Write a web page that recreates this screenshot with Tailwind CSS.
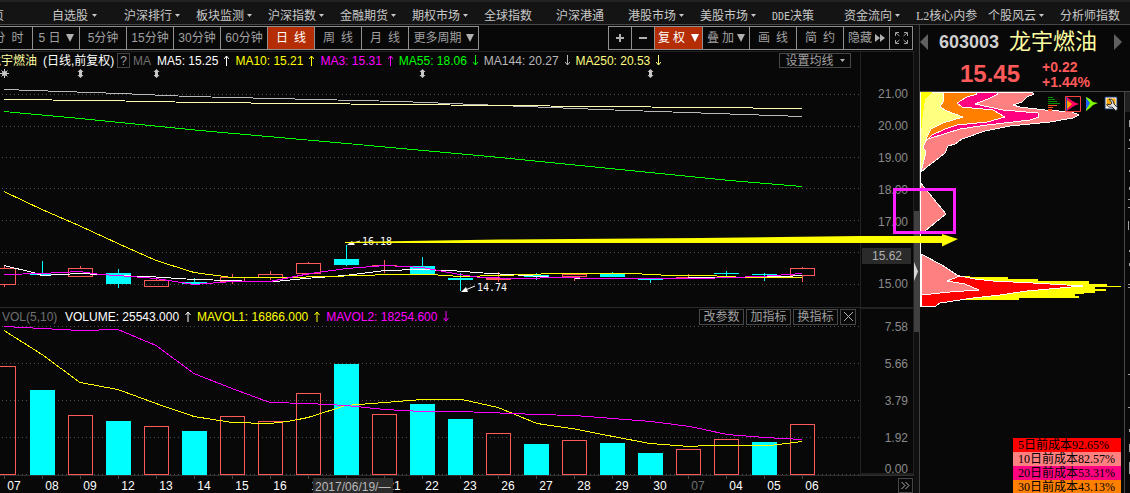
<!DOCTYPE html>
<html lang="zh-CN">
<head>
<meta charset="utf-8">
<title>603003 龙宇燃油</title>
<script src="https://cdn.jsdelivr.net/npm/@tailwindcss/browser@4"></script>
</head>
<body class="relative flex h-screen flex-col overflow-hidden bg-[#080808] font-['Liberation_Sans','Noto_Sans_CJK_SC',sans-serif] text-xs text-[#a0a0a0]">

<!-- Top navigation -->
<nav class="-ml-5 flex h-[25px] shrink-0 items-center border-t-2 border-b border-t-[#222] border-b-[#484848] bg-[#141414] pt-[5px] whitespace-nowrap text-[#c8c8c8]">
  <a href="#" class="w-[72px] shrink-0">首页</a>
  <a href="#" class="flex w-[72px] shrink-0 items-center gap-1">自选股<svg class="h-[3px] w-[5px]" viewBox="0 0 5 3"><path d="M0 0h5L2.500 3z" fill="#c8c8c8"/></svg></a>
  <a href="#" class="flex w-[72px] shrink-0 items-center gap-[3px]">沪深排行<svg class="h-[3px] w-[5px]" viewBox="0 0 5 3"><path d="M0 0h5L2.500 3z" fill="#c8c8c8"/></svg></a>
  <a href="#" class="flex w-[72px] shrink-0 items-center gap-[3px]">板块监测<svg class="h-[3px] w-[5px]" viewBox="0 0 5 3"><path d="M0 0h5L2.500 3z" fill="#c8c8c8"/></svg></a>
  <a href="#" class="flex w-[72px] shrink-0 items-center gap-[3px]">沪深指数<svg class="h-[3px] w-[5px]" viewBox="0 0 5 3"><path d="M0 0h5L2.500 3z" fill="#c8c8c8"/></svg></a>
  <a href="#" class="flex w-[72px] shrink-0 items-center gap-[3px]">金融期货<svg class="h-[3px] w-[5px]" viewBox="0 0 5 3"><path d="M0 0h5L2.500 3z" fill="#c8c8c8"/></svg></a>
  <a href="#" class="flex w-[72px] shrink-0 items-center gap-[3px]">期权市场<svg class="h-[3px] w-[5px]" viewBox="0 0 5 3"><path d="M0 0h5L2.500 3z" fill="#c8c8c8"/></svg></a>
  <a href="#" class="w-[72px] shrink-0">全球指数</a>
  <a href="#" class="w-[72px] shrink-0">沪深港通</a>
  <a href="#" class="flex w-[72px] shrink-0 items-center gap-[3px]">港股市场<svg class="h-[3px] w-[5px]" viewBox="0 0 5 3"><path d="M0 0h5L2.500 3z" fill="#c8c8c8"/></svg></a>
  <a href="#" class="flex w-[72px] shrink-0 items-center gap-[3px]">美股市场<svg class="h-[3px] w-[5px]" viewBox="0 0 5 3"><path d="M0 0h5L2.500 3z" fill="#c8c8c8"/></svg></a>
  <a href="#" class="w-[72px] shrink-0"><span class="font-['DejaVu_Sans_Mono',monospace] text-[10px]">DDE</span>决策</a>
  <a href="#" class="flex w-[72px] shrink-0 items-center gap-[3px]">资金流向<svg class="h-[3px] w-[5px]" viewBox="0 0 5 3"><path d="M0 0h5L2.500 3z" fill="#c8c8c8"/></svg></a>
  <a href="#" class="w-[72px] shrink-0"><span class="font-['Liberation_Serif',serif]">L2</span>核心内参</a>
  <a href="#" class="flex w-[72px] shrink-0 items-center gap-[3px]">个股风云<svg class="h-[3px] w-[5px]" viewBox="0 0 5 3"><path d="M0 0h5L2.500 3z" fill="#c8c8c8"/></svg></a>
  <a href="#" class="w-[72px] shrink-0">分析师指数</a>
</nav>

<div class="flex min-h-0 flex-1">
  <main class="flex min-w-0 flex-1 flex-col">
    <!-- Period toolbar -->
    <div class="flex h-[27px] shrink-0 items-center justify-between border-b border-[#222] pr-px whitespace-nowrap">
      <div class="-ml-[15px] flex h-6 border-y border-r border-[#909090]">
        <button class="flex w-[47px] items-center justify-center gap-[6px]"><span>分</span><span>时</span></button>
        <button class="flex w-[47px] items-center justify-center gap-[5px] border-l border-[#909090]"><span>5 日</span><svg class="h-2 w-2" viewBox="0 0 8 8"><path d="M0 0h8L4 8z" fill="#b0b0b0"/></svg></button>
        <button class="w-[47px] border-l border-[#909090]">5分钟</button>
        <button class="w-[47px] border-l border-[#909090]">15分钟</button>
        <button class="w-[47px] border-l border-[#909090]">30分钟</button>
        <button class="w-[47px] border-l border-[#909090]">60分钟</button>
        <button class="flex w-[47px] items-center justify-center gap-[6px] border-l border-[#909090] bg-[#b42d04] text-white"><span>日</span><span>线</span></button>
        <button class="flex w-[47px] items-center justify-center gap-[6px] border-l border-[#909090]"><span>周</span><span>线</span></button>
        <button class="flex w-[47px] items-center justify-center gap-[6px] border-l border-[#909090]"><span>月</span><span>线</span></button>
        <button class="flex w-[70px] items-center justify-center gap-1 border-l border-[#909090]">更多周期<svg class="h-2 w-2" viewBox="0 0 8 8"><path d="M0 0h8L4 8z" fill="#b0b0b0"/></svg></button>
      </div>
      <div class="flex h-6 border-y border-r border-[#909090]">
        <button aria-label="放大" class="flex w-[23px] items-center justify-center border-l border-[#909090]"><svg class="h-2 w-2" viewBox="0 0 8 8"><path d="M0 4h8M4 0v8" stroke="#b0b0b0" stroke-width="2"/></svg></button>
        <button aria-label="缩小" class="flex w-[23px] items-center justify-center border-l border-[#909090]"><svg class="h-2 w-2" viewBox="0 0 8 8"><path d="M0 4h8" stroke="#b0b0b0" stroke-width="2"/></svg></button>
        <button class="flex w-[48px] items-center justify-center gap-[3px] border-l border-[#909090] bg-[#b42d04] text-white"><span>复</span><span>权</span><svg class="ml-[3px] h-2 w-2" viewBox="0 0 8 8"><path d="M0 0h8L4 8z" fill="#fff"/></svg></button>
        <button class="flex w-[47px] items-center justify-center gap-[3px] border-l border-[#909090]"><span>叠</span><span>加</span><svg class="h-2 w-2" viewBox="0 0 8 8"><path d="M0 0h8L4 8z" fill="#b0b0b0"/></svg></button>
        <button class="flex w-[47px] items-center justify-center gap-[6px] border-l border-[#909090]"><span>画</span><span>线</span></button>
        <button class="flex w-[47px] items-center justify-center gap-[6px] border-l border-[#909090]"><span>简</span><span>约</span></button>
        <button class="flex w-[46px] items-center justify-center gap-[3px] border-l border-[#909090]">隐藏<svg class="h-2 w-[10px]" viewBox="0 0 10 8"><path d="M0 0l5 4-5 4zM5 0l5 4-5 4z" fill="#b0b0b0"/></svg></button>
        <button aria-label="全屏" class="flex w-[23px] items-center justify-center border-l border-[#909090]"><svg class="h-3 w-[13px]" viewBox="0 0 13 12" fill="none" stroke="#a0a0a0"><path d="M.5 4V.5H4M1 1l3.500 3M9 .5h3.500V4M12 1L8.500 4M.5 8v3.500H4M1 11l3.500-3M9 11.500h3.500V8M12 11L8.500 8"/></svg></button>
      </div>
    </div>

    <div class="flex min-h-0 flex-1">
      <div class="flex min-w-0 flex-1 flex-col">
        <!-- Price pane -->
        <div class="flex h-[17px] shrink-0 items-center pr-[9px] whitespace-nowrap">
          <div class="-ml-[11px] flex items-center gap-[6px]">
            <div class="flex items-center gap-[3px]">
              <span class="text-[#ffffa0]">龙宇燃油</span>
              <span class="w-[74px] pl-[3px] text-white">(日线,前复权)</span>
              <button class="h-[15px] w-[13px] border border-[#444] leading-3">?</button>
              <span class="w-[18px] text-[#707070]">MA</span>
            </div>
            <span class="text-white">MA5: 15.25</span>
            <svg class="h-[11px] w-[5px]" viewBox="0 0 5 11" fill="none" stroke="#fff"><path d="M2.500 11V1M0 4l2.500-3L5 4"/></svg>
            <span class="text-[#ff0]">MA10: 15.21</span>
            <svg class="h-[11px] w-[5px]" viewBox="0 0 5 11" fill="none" stroke="#ff0"><path d="M2.500 11V1M0 4l2.500-3L5 4"/></svg>
            <span class="text-[#f0f]">MA3: 15.31</span>
            <svg class="h-[11px] w-[5px]" viewBox="0 0 5 11" fill="none" stroke="#f0f"><path d="M2.500 11V1M0 4l2.500-3L5 4"/></svg>
            <span class="text-[#0f0]">MA55: 18.06</span>
            <svg class="h-[11px] w-[5px]" viewBox="0 0 5 11" fill="none" stroke="#0f0"><path d="M2.500 0v10M0 7l2.500 3L5 7"/></svg>
            <span class="text-[#b8b8b8]">MA144: 20.27</span>
            <svg class="h-[11px] w-[5px]" viewBox="0 0 5 11" fill="none" stroke="#b8b8b8"><path d="M2.500 0v10M0 7l2.500 3L5 7"/></svg>
            <span class="text-[#ffff80]">MA250: 20.53</span>
            <svg class="h-[11px] w-[5px]" viewBox="0 0 5 11" fill="none" stroke="#ffff80"><path d="M2.500 0v10M0 7l2.500 3L5 7"/></svg>
          </div>
          <button class="ml-auto flex h-[15px] w-[72px] items-center justify-center gap-[6px] border border-[#484848] leading-3">设置均线<svg class="h-[3px] w-[5px]" viewBox="0 0 5 3"><path d="M0 0h5L2.500 3z" fill="#b0b0b0"/></svg></button>
        </div>
        <svg class="min-h-0 w-full flex-1" viewBox="0 69 860 238" preserveAspectRatio="none" fill="none" shape-rendering="crispEdges">
          <path d="M2 94.500H860M2 126.500H860M2 157.500H860M2 188.500H860M2 220.500H860M2 252.500H860M2 284.500H860" stroke="#505050" stroke-dasharray="1 3"/>
          <!-- event markers -->
          <g fill="#c8c8c8" shape-rendering="auto">
            <path d="M80.500 69l3 3h-1.500v3h1.500l-3 3-3-3H79v-3h-1.500zM156.500 69l3 3H158v3h1.500l-3 3-3-3h1.500v-3h-1.500zM422.500 69l3 3H424v3h1.500l-3 3-3-3h1.500v-3h-1.500zM650.500 69l3 3H652v3h1.500l-3 3-3-3h1.500v-3h-1.500z"/>
            <circle cx="4.500" cy="73.500" r="2.500"/>
            <path d="M4.500 69v9M0 73.500h9M1.500 70.500l6 6M7.500 70.500l-6 6" stroke="#c8c8c8"/>
          </g>
          <!-- candles -->
          <g stroke="#ff5a5a">
            <path d="M-8.500 268.500h24v16h-24zM68.500 268.500h24v8h-24zM144.500 280.500h24v6h-24zM220.500 277.500h24v4h-24zM258.500 274.500h24v3h-24zM296.500 263.500h24v10h-24zM372 265.500h25M486.500 278.500h24v1h-24zM562.500 274.500h24v2h-24zM676 277.500h25M790.500 268.500h24v7h-24z"/>
            <path d="M4.500 266v2M4.500 285v2M80.500 266v2M156.500 277v3M232.500 274v3M232.500 282v2M270.500 271v3M270.500 278v2M308.500 262v1M308.500 274v1M384.500 260v13M498.500 272v10M574.500 277v4M688.500 274v4M802.500 267v1M802.500 276v6"/>
          </g>
          <path d="M42 261h1v13h-1zM30 274h25v1H30zM106 273h25v11h-25zM118 269h1v19h-1zM182 282h25v2h-25zM194 278h1v7h-1zM334 259h25v6h-25zM346 245h1v21h-1zM410 266h25v8h-25zM422 257h1v10h-1zM448 278h25v2h-25zM460 273h1v18h-1zM524 275h25v2h-25zM536 273h1v7h-1zM600 273h25v4h-25zM612 272h1v2h-1zM638 279h25v1h-25zM650 279h1v4h-1zM714 273h25v1h-25zM726 271h1v5h-1zM752 274h25v1h-25zM764 273h1v8h-1z" fill="#0ff"/>
          <!-- moving averages -->
          <path d="M4 89.500L120 93.500 190 96.500 400 101.500 600 109.500 802 116.500" stroke="#b8b8b8"/>
          <path d="M4 99.500L100 100.500 200 102.500 400 104.500 600 106.500 802 108.500" stroke="#ffffb0"/>
          <path d="M4 111.500L80 118.500 200 130.500 347 143.500 500 157.500 650 172.500 730 180.500 802 186.500" stroke="#0f0"/>
          <path d="M4 265.500L33 272.500 42 275.500 80 273.500 118 275.500 156 277 194 279.500 232 280.500 252 281.500 275 281.500 305 278.500 345 275.500 385 270.500 420 269.500 450 270.500 490 273.500 510 274.500 555 277.500 595 278.500 670 278.500 707 277.500 745 277.500 785 276.500 802 275.500" stroke="#fff"/>
          <path d="M4 191.500L42 209.500 80 226 118 243.500 156 260.500 194 272.500 232 277.500 288 277.500 325 276.500 365 275.500 385 274.500 430 274.500 460 276.500 500 275.500 555 273.500 632 273.500 670 275.500 707 275.500 745 277.500 802 277.500" stroke="#ff0"/>
          <path d="M4 274.500L42 273.500 80 271.500 100 274.500 118 275.500 156 278.500 194 284.500 232 281.500 270 281.500 290 277.500 310 273.500 347 268.500 385 265.500 422 267.500 460 274.500 480 277.500 520 278.500 560 277.500 600 278.500 632 278.500 700 278.500 760 276.500 802 273.500" stroke="#f0f"/>
          <!-- extreme price labels -->
          <g shape-rendering="auto">
            <path d="M350 244l10-3M463 291l12-5" stroke="#fff"/>
            <path d="M347 245l5-4 3 4zM461 292l5-5 2 5z" fill="#fff"/>
            <g class="font-['DejaVu_Sans_Mono',monospace] text-[10px]" fill="#fff"><text x="362" y="245">16.18</text><text x="477" y="291">14.74</text></g>
          </g>
        </svg>

        <!-- Volume pane -->
        <div class="flex h-[18px] shrink-0 items-center border-t border-[#2a2a2a] pr-1 pl-[2px] whitespace-nowrap">
          <div class="flex items-center gap-[6px]">
            <span class="w-[57px] text-[#707070]">VOL(5,10)</span>
            <span class="text-white">VOLUME: 25543.000</span>
            <svg class="h-[11px] w-[6px]" viewBox="0 0 6 11" fill="none" stroke="#fff"><path d="M3 11V1M.5 4L3 1l2.500 3"/></svg>
            <span class="text-[#ff0]">MAVOL1: 16866.000</span>
            <svg class="h-[11px] w-[6px]" viewBox="0 0 6 11" fill="none" stroke="#ff0"><path d="M3 11V1M.5 4L3 1l2.500 3"/></svg>
            <span class="text-[#f0f]">MAVOL2: 18254.600</span>
            <svg class="h-[11px] w-[6px]" viewBox="0 0 6 11" fill="none" stroke="#f0f"><path d="M3 0v10M.5 7L3 10l2.500-3"/></svg>
          </div>
          <div class="ml-auto flex gap-[2px] leading-3">
            <button class="h-4 w-[45px] border border-[#484848]">改参数</button>
            <button class="h-4 w-[45px] border border-[#484848]">加指标</button>
            <button class="h-4 w-[45px] border border-[#484848]">换指标</button>
            <button aria-label="关闭" class="flex h-4 w-4 items-center justify-center border border-[#484848]"><svg class="h-[9px] w-[9px]" viewBox="0 0 9 9"><path d="M0 0l9 9M9 0L0 9" stroke="#b0b0b0"/></svg></button>
          </div>
        </div>
        <svg class="h-[150px] w-full shrink-0" viewBox="0 325 860 150" preserveAspectRatio="none" fill="none" shape-rendering="crispEdges">
          <path d="M2 326.500H860M2 363.500H860M2 400.500H860M2 437.500H860M2 474.500H860" stroke="#505050" stroke-dasharray="1 3"/>
          <path d="M-8.500 366.500h24v108h-24zM68.500 415.500h24v59h-24zM144.500 426.500h24v48h-24zM220.500 416.500h24v58h-24zM258.500 421.500h24v53h-24zM296.500 393.500h24v81h-24zM372.500 414.500h24v60h-24zM486.500 433.500h24v41h-24zM562.500 440.500h24v34h-24zM676.500 449.500h24v25h-24zM714.500 439.500h24v35h-24zM790.500 424.500h24v50h-24z" stroke="#ff5a5a"/>
          <path d="M30 390h25v85H30zM106 421h25v54h-25zM182 431h25v44h-25zM334 364h25v111h-25zM410 404h25v71h-25zM448 419h25v56h-25zM524 444h25v31h-25zM600 443h25v32h-25zM638 453h25v22h-25zM752 442h25v33h-25z" fill="#0ff"/>
          <path d="M4 330.500L42 354.500 80 382.500 118 389.500 156 403.500 194 416.500 232 422.500 270 423.500 288 421.500 308 417.500 346 405.500 385 402.500 422 399.500 462 399.500 498 407.500 537 423.500 575 429 613 436.500 650 443.500 690 446.500 707 445.500 770 445.500 802 441.500" stroke="#ff0"/>
          <path d="M4 326.500L42 328.500 80 330.500 118 329.500 156 345.500 194 373.500 232 388.500 270 402.500 308 403.500 346 405.500 385 409.500 422 411.500 460 411.500 500 413 537 414.500 575 415.500 613 418.500 651 421.500 690 426.500 727 434.500 765 437.500 802 439.500" stroke="#f0f"/>
        </svg>
      </div>

      <!-- Value axis -->
      <div class="flex w-[54px] shrink-0 flex-col border-x border-[#222] text-right text-[#8a8a8a]">
        <div class="flex flex-1 flex-col pt-[26px] leading-8">
          <span class="pr-[5px]">21.00</span>
          <span class="pr-[5px]">20.00</span>
          <span class="pr-[5px]">19.00</span>
          <span class="pr-[5px]">18.00</span>
          <span class="pr-[5px]">17.00</span>
          <span class="mt-[10px] mr-[2px] ml-px bg-[#2a2a2a] pr-[9px] leading-4 text-[#b0b0b0]">15.62</span>
          <span class="mt-1 pr-[5px]">15.00</span>
        </div>
        <div class="flex h-[168px] shrink-0 flex-col border-y-2 border-[#222] pr-[5px] leading-[37px]">
          <span>7.58</span>
          <span>5.66</span>
          <span>3.79</span>
          <span>1.92</span>
          <span class="leading-6">0.00</span>
        </div>
      </div>
    </div>

    <!-- Date axis -->
    <div class="relative flex h-[18px] shrink-0 border-t border-[#303030] text-white">
      <svg class="absolute top-0 left-0 h-[3px] w-[860px]" viewBox="0 0 860 3" shape-rendering="crispEdges"><path d="M4 1.500H804" stroke="#484848" stroke-width="3" stroke-dasharray="1 37"/></svg>
      <div class="-ml-[5px] flex text-center leading-[20px]">
        <span class="w-[38px]">07</span><span class="w-[38px]">08</span><span class="w-[38px]">09</span><span class="w-[38px]">12</span><span class="w-[38px]">13</span><span class="w-[38px]">14</span><span class="w-[38px]">15</span><span class="w-[38px]">16</span><span class="w-[38px]">19</span><span class="w-[38px]"></span><span class="w-[38px]">21</span><span class="w-[38px]">22</span><span class="w-[38px]">23</span><span class="w-[38px]">26</span><span class="w-[38px]">27</span><span class="w-[38px]">28</span><span class="w-[38px]">29</span><span class="w-[38px]">30</span><span class="w-[38px] text-[#707070]">07</span><span class="w-[38px]">04</span><span class="w-[38px]">05</span><span class="w-[38px]">06</span>
      </div>
      <button aria-label="更多" class="mt-[2px] mr-px ml-auto flex h-[15px] w-[15px] items-center justify-center border border-[#484848]"><svg class="h-[7px] w-[9px]" viewBox="0 0 9 7" fill="none" stroke="#b0b0b0"><path d="M.5 0L4 3.500.5 7M4.500 0L8 3.500 4.500 7"/></svg></button>
      <div class="absolute top-[2px] left-[313px] h-[15px] w-20 overflow-hidden bg-[#2c2c2c] pl-[2px] leading-[18px] whitespace-nowrap text-[#b8b8b8]">2017/06/19/—</div>
    </div>
  </main>

  <!-- Splitter -->
  <div class="flex w-[5px] shrink-0 flex-col bg-[#101010] pt-[186px]">
    <div class="flex h-[121px] items-center bg-[#404040]"><svg class="h-[19px] w-1" viewBox="0 0 4 19"><path d="M0 0l4 9.500L0 19z" fill="#d8d8d8"/></svg></div>
  </div>

  <!-- Quote and cost distribution -->
  <aside class="flex w-[211px] shrink-0 flex-col border-l border-[#404040]">
    <header class="h-[67px] shrink-0 border-b border-[#484848] whitespace-nowrap">
      <div class="flex h-[33px] items-center pr-2">
        <button aria-label="上一只"><svg class="h-4 w-2" viewBox="0 0 8 16"><path d="M8 0v16L0 8z" fill="#606060"/></svg></button>
        <span class="ml-[11px] text-lg leading-6 font-bold text-[#d0d0d0]">603003</span>
        <span class="ml-[10px] text-[22px] leading-6 text-[#ffffa0]">龙宇燃油</span>
        <button class="ml-auto" aria-label="下一只"><svg class="h-4 w-2" viewBox="0 0 8 16"><path d="M0 0v16l8-8z" fill="#606060"/></svg></button>
      </div>
      <div class="flex items-center gap-[22px] pl-10 font-bold text-[#ff5a5a]">
        <span class="text-2xl">15.45</span>
        <div class="flex flex-col pt-[2px] text-sm leading-[15px]"><span>+0.22</span><span>+1.44%</span></div>
      </div>
    </header>
    <div class="flex min-h-0 flex-1">
      <div class="relative min-w-0 flex-1">
        <svg class="block h-[215px] w-full" viewBox="920 92 204 215" preserveAspectRatio="none" stroke="#fff" shape-rendering="crispEdges">
          <path d="M920 92H1032L1034 94 1027 97 1022 102 1013 105 1020 107 1045 110 1072 112 1079 115 1073 118 1050 122 1010 126 985 131 962 139 955 144 948 146 945 153 935 161 927 167 921 172V92z" fill="#ff8080"/>
          <path d="M920 92H997L998 94 988 99 975 104 1003 110 1038 113 1039 117 1030 120 987 125 960 129 928 139 921 142z" fill="#ff0080"/>
          <path d="M920 92H975L977 94 967 97 957 103 962 107 993 110 1005 117 987 122 957 125 945 129 932 135 927 140 921 144z" fill="#ff8000"/>
          <path d="M920 92H943V102L940 107 947 111 963 117 943 123 931 129 927 137 925 143 923 147 926 152 924 160 921 172z" fill="#ffff80"/>
          <path d="M920 92H932L925 100 923 113 921 133z" fill="#ff0" stroke="none"/>
          <path d="M920 182L946 214 920 235z" fill="#ff8080"/>
          <path d="M957 276H970V277H1008V279H1038V281H1089V284H1107V286H1121V287H1095V289H1106V291H1095V293H1084V294H1075V296H1079V298H1019V300H960z" fill="#ff0" stroke="none"/>
          <path d="M921 295L950 292 979 290 965 284 947 281 960 276 975 279 993 281 1033 283 1083 286 1060 288 1027 291 1000 295 973 298 960 300 940 303 936 306H921z" fill="#f00"/>
          <path d="M921 254L942 265 957 275 960 276 947 281 965 284 979 290 950 292 921 295z" fill="#ff8080"/>
          <path d="M920.500 92V307"/>
        </svg>
        <!-- display mode buttons -->
        <div class="absolute top-1 right-[5px] flex gap-[3px]">
          <button aria-label="分布"><svg class="h-4 w-4" viewBox="0 0 16 16" shape-rendering="crispEdges"><path d="M2 1h5v1H2zM2 3h7v1H2zM2 5h9v1H2zM2 7h12v1H2z" fill="#009000"/><path d="M2 9h9v1H2zM2 11h5v1H2zM2 13h4v2H2z" fill="#ff5020"/></svg></button>
          <button aria-label="近期成本"><svg class="h-4 w-4" viewBox="0 0 16 16"><path d="M.5.5h15v15H.5z" fill="none" stroke="#ff4040"/><path d="M1.500 1v14" stroke="#0050b0"/><path d="M2 1l4 3 3 2 5 2-5 2-3 2-4 3z" fill="#ff0060"/><path d="M2 4l5 4-5 5z" fill="#ffa000"/></svg></button>
          <button aria-label="远期成本"><svg class="h-4 w-4" viewBox="0 0 16 16"><path d="M2 1l4 2 3 3 5 1-5 2-3 3-4 3z" fill="#80ff00"/><path d="M2 2l4 5-4 7z" fill="#2060ff"/></svg></button>
          <button aria-label="设置"><svg class="h-4 w-4" viewBox="0 0 16 16"><path d="M2 1h12v12H2z" fill="#fff" stroke="#103060"/><path d="M3.500 2.500h9v8h-9z" fill="#ffa500"/><path d="M6 3c3 0 5 2 5 5l4 4-2 3-4-4c-3 1-5-1-5-3l3 1 2-2z" fill="#e0e0e0" stroke="#303030"/></svg></button>
        </div>
        <!-- cost legend -->
        <ul class="absolute top-[346px] right-[3px] w-[108px] font-['Liberation_Serif','Noto_Sans_CJK_SC',serif] leading-[14px] whitespace-nowrap text-black">
          <li class="h-[14px] bg-[#f00] pl-[5px]">5日前成本92.65%</li>
          <li class="h-[14px] bg-[#ff8080] pl-[5px]">10日前成本82.57%</li>
          <li class="h-[14px] bg-[#ff0080] pl-[5px]">20日前成本53.31%</li>
          <li class="h-[14px] bg-[#ff8000] pl-[5px]">30日前成本43.13%</li>
        </ul>
      </div>
      <!-- edge of the neighbouring column -->
      <div class="w-[6px] shrink-0 border-l border-[#484848]">
        <svg class="h-[401px] w-[5px]" viewBox="1125 92 5 401" shape-rendering="crispEdges"><path d="M1125 92h5v20h-5z" fill="#202020"/><path d="M1129 120h1v7h-1zM1129 139h1v2h-1zM1128 148h2v1h-2zM1129 170h1v2h-1zM1129 187h1v3h-1zM1128 199h2v1h-2zM1128 207h2v1h-2zM1128 221h1v9h-1zM1129 250h1v2h-1zM1129 263h1v3h-1zM1128 284h2v1h-2zM1128 287h2v1h-2zM1128 374h2v1h-2zM1128 407h2v1h-2zM1129 429h1v3h-1zM1129 444h1v8h-1zM1129 462h1v12h-1z" fill="#a0a0a0"/></svg>
      </div>
    </div>
  </aside>
</div>

<!-- Hand-drawn annotation across the panes -->
<svg class="pointer-events-none absolute top-0 left-0 h-[493px] w-[1130px]" viewBox="0 0 1130 493">
  <rect x="894.500" y="189.500" width="60" height="43" fill="none" stroke="#ff20ff" stroke-width="3"/>
  <path d="M345 242L500 239.500 700 238 860 236H942V234L958 239 942 246.500V243H500L345 243z" fill="#ff0"/>
</svg>
</body>
</html>
